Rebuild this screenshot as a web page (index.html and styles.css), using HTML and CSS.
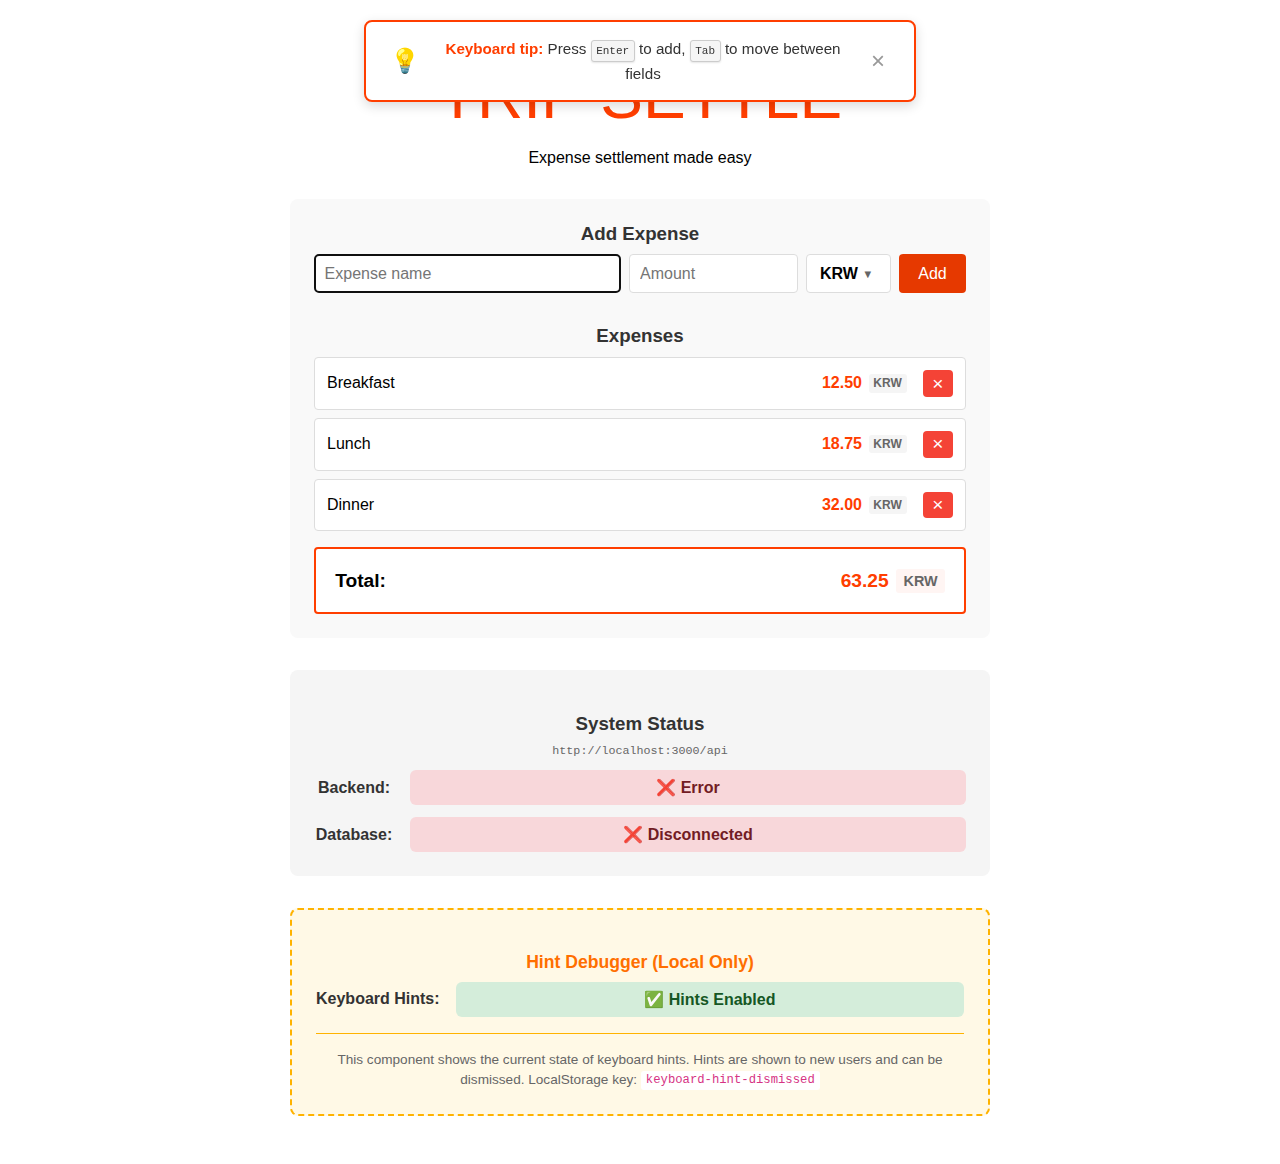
FILE: index.html
```html
<!DOCTYPE html>
<html lang="en">
<head>
<meta charset="utf-8">
<title>Trip Settle</title>
<link rel="stylesheet" href="styles.css">
</head>
<body>
<aside class="toast">
  <span class="toast-icon">💡</span>
  <div class="toast-text"><strong>Keyboard tip:</strong> Press <kbd>Enter</kbd> to add, <kbd>Tab</kbd> to move between fields</div>
  <button class="toast-close" aria-label="Dismiss">×</button>
</aside>
<main class="app">
  <h1 class="title">TRIP SETTLE</h1>
  <p class="subtitle">Expense settlement made easy</p>

  <section class="card tracker">
    <h3>Add Expense</h3>
    <form class="form">
      <input class="field name focused" type="text" placeholder="Expense name">
      <input class="field amount" type="text" placeholder="Amount">
      <button class="currency" type="button"><span>KRW</span><span class="arrow">▼</span></button>
      <button class="add" type="button">Add</button>
    </form>
    <h3>Expenses</h3>
    <ul class="list">
      <li class="item"><span class="label">Breakfast</span><span class="value">12.50</span><span class="code">KRW</span><button class="remove">×</button></li>
      <li class="item"><span class="label">Lunch</span><span class="value">18.75</span><span class="code">KRW</span><button class="remove">×</button></li>
      <li class="item"><span class="label">Dinner</span><span class="value">32.00</span><span class="code">KRW</span><button class="remove">×</button></li>
    </ul>
    <div class="total"><span class="label">Total:</span><span class="value">63.25</span><span class="code">KRW</span></div>
  </section>

  <section class="card status">
    <h3>System Status</h3>
    <p class="url">http://localhost:3000/api</p>
    <div class="row"><span class="row-label">Backend:</span><span class="badge error">❌ Error</span></div>
    <div class="row"><span class="row-label">Database:</span><span class="badge error">❌ Disconnected</span></div>
  </section>

  <section class="card debugger">
    <h3>Hint Debugger (Local Only)</h3>
    <div class="row"><span class="row-label">Keyboard Hints:</span><span class="badge ok">✅ Hints Enabled</span></div>
    <p class="note">This component shows the current state of keyboard hints. Hints are shown to new users and can be dismissed. LocalStorage key: <code>keyboard-hint-dismissed</code></p>
  </section>
</main>
</body>
</html>
```
FILE: styles.css
```css
* { box-sizing: border-box; }
body {
  margin: 0;
  background: #fff;
  color: #000;
  font-family: "Liberation Sans", Arial, sans-serif;
  font-size: 16px;
  line-height: 24px;
  text-align: center;
}
button, input { font-family: inherit; font-size: 16px; margin: 0; }
h1, h3, p, ul { margin: 0; padding: 0; }

.toast {
  position: fixed;
  z-index: 10;
  top: 20px;
  left: 364px;
  width: 552px;
  height: 82px;
  display: flex;
  align-items: center;
  gap: 16px;
  padding: 0 24px;
  background: #fff;
  border: 2px solid #ff3e00;
  border-radius: 8px;
  box-shadow: 0 4px 12px rgba(0, 0, 0, .15);
}
.toast-icon { font-size: 24px; flex: none; }
.toast-text { flex: 1; padding-top: 1.6px; font-size: 15.2px; line-height: 24.3px; color: #333; }
.toast-text strong { color: #ff3e00; }
kbd {
  display: inline-block;
  padding: 2.4px 4.6px 3.6px;
  font-family: "Liberation Mono", monospace;
  font-size: 11px;
  line-height: 14px;
  background: #f5f5f5;
  border: 1px solid #ccc;
  border-radius: 3px;
  box-shadow: 0 1px 2px rgba(0, 0, 0, .1);
}
.toast-close {
  flex: none;
  width: 24px;
  padding: 0;
  border: 0;
  background: none;
  color: #999;
  font-size: 24px;
}

.app { width: 700px; margin: 0 auto; padding: 60.6px 0 48px; }
.title { font-size: 64px; font-weight: 400; line-height: 70.4px; color: #ff3e00; }
.subtitle { margin: 14.5px 0 29.1px; }

.card { padding: 24px; border-radius: 8px; margin-bottom: 32px; }
.card:last-child { margin-bottom: 0; }
h3 { font-size: 18.72px; line-height: 21px; color: #333; }

.tracker { height: 439px; background: #f9f9f9; }
.form { display: flex; gap: 8px; height: 39px; margin: 10px 0 32px; }
.field, .currency { background: #fff; border: 1px solid #ddd; border-radius: 4px; color: #000; }
.field { min-width: 0; padding: 1px 10px 0; }
.field::placeholder { color: #757575; }
.name { width: 307px; }
.name.focused { border: 2px solid #101010; border-radius: 5px; padding: 1px 8.6px 0; outline: 0; }
.amount { width: 169px; }
.currency { display: flex; align-items: center; gap: 4.4px; width: 85px; padding: 1px 0 0 13px; font-weight: 700; }
.arrow { font-size: 11.2px; font-weight: 400; color: #666; }
.add { flex: 1; padding: 1px 0 0; border: 0; border-radius: 4px; background: #e63900; color: #fff; }

.list { list-style: none; margin-top: 11.4px; display: grid; gap: 8px; }
.item {
  display: flex;
  align-items: center;
  height: 52.8px;
  padding: 0 12px;
  background: #fff;
  border: 1px solid #ddd;
  border-radius: 4px;
}
.label { flex: 1; text-align: left; }
.value { color: #ff3e00; font-weight: 700; }
.code { font-weight: 700; color: #666; font-size: 12px; line-height: 18.4px; padding: 0 5.2px 0 4.4px; margin-left: 7px; border-radius: 3px; background: #f5f5f5; }
.remove {
  width: 30px;
  height: 26.8px;
  margin-left: 16px;
  padding: 0.6px 0.4px 0 0;
  border: 0;
  border-radius: 4px;
  background: #f44336;
  color: #fff;
  font-size: 19.2px;
}
.total {
  display: flex;
  align-items: center;
  height: 67px;
  margin-top: 16px;
  padding: 0 19px 0 19.2px;
  background: #fff;
  border: 2px solid #ff3e00;
  border-radius: 4px;
  font-size: 19.2px;
  font-weight: 700;
}
.total .code { font-size: 14.4px; line-height: 24px; padding: 0 7.4px 0 7.8px; background: #fff5f3; }

.status { height: 206px; padding-top: 43px; background: #f5f5f5; }
.url { margin: 10px 0 11px; font: 11.7px/15px "Liberation Mono", monospace; color: #666; }
.row { display: flex; align-items: center; font-weight: 700; color: #333; height: 35px; }
.row + .row { margin-top: 12px; }
.row-label { width: 80px; padding-top: 1px; }
.badge { flex: 1; margin-left: 16px; line-height: 35px; border-radius: 6px; }
.error { background: #f8d7da; color: #721c24; }
.ok { background: #d4edda; color: #155724; }

.debugger { height: 208px; padding-top: 42px; background: #fff9e6; border: 2px dashed #ffb300; }
.debugger h3 { color: #ff6f00; font-size: 17.6px; margin-bottom: 9px; }
.debugger .row-label { width: 123.6px; margin-top: -2px; }
.debugger .badge { margin-left: 16.2px; }
.note { margin-top: 16px; padding-top: 16px; border-top: 1px solid #ffb300; font-size: 13.6px; line-height: 20.4px; color: #666; }
code { padding: 2px 5px 3px; border-radius: 3px; background: #fff; color: #d63384; font: 12.24px "Liberation Mono", monospace; position: relative; top: -1px; }
```
